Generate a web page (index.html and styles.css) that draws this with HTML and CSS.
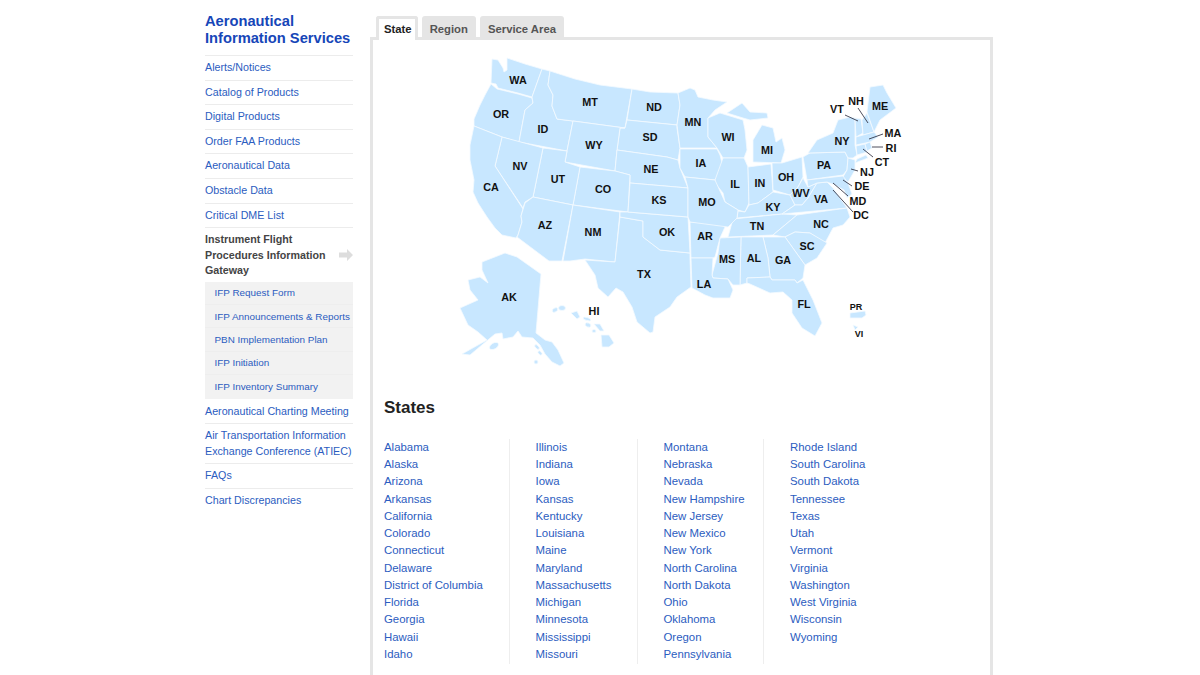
FILE: index.html
```html
<!DOCTYPE html>
<html lang="en">
<head>
<meta charset="utf-8">
<title>Aeronautical Information Services</title>
<link rel="stylesheet" href="styles.css">
</head>
<body>
<div class="page">
  <aside class="sidebar">
    <h2 class="site-title">Aeronautical Information Services</h2>
    <ul class="nav">
      <li><a href="#">Alerts/Notices</a></li>
      <li><a href="#">Catalog of Products</a></li>
      <li><a href="#">Digital Products</a></li>
      <li><a href="#">Order FAA Products</a></li>
      <li><a href="#">Aeronautical Data</a></li>
      <li><a href="#">Obstacle Data</a></li>
      <li><a href="#">Critical DME List</a></li>
      <li class="current">
        <div class="current-row">
          <span class="current-label">Instrument Flight Procedures Information Gateway</span>
          <svg class="arrow" width="14" height="12" viewBox="0 0 14 12"><path d="M0 3.5H8V0L14 6 8 12V8.5H0Z"/></svg>
        </div>
        <ul class="subnav">
          <li><a href="#">IFP Request Form</a></li>
          <li><a href="#">IFP Announcements &amp; Reports</a></li>
          <li><a href="#">PBN Implementation Plan</a></li>
          <li><a href="#">IFP Initiation</a></li>
          <li><a href="#">IFP Inventory Summary</a></li>
        </ul>
      </li>
      <li class="after-sub"><a href="#">Aeronautical Charting Meeting</a></li>
      <li><a href="#">Air Transportation Information Exchange Conference (ATIEC)</a></li>
      <li><a href="#">FAQs</a></li>
      <li><a href="#">Chart Discrepancies</a></li>
    </ul>
  </aside>
  <main class="main">
    <div class="tabs">
      <span class="tab active">State</span>
      <span class="tab">Region</span>
      <span class="tab">Service Area</span>
    </div>
    <section class="panel">
      <svg class="map" width="460" height="320" viewBox="450 50 460 320">
        <g class="states">
          <polygon points="492,59 498,60 503,68 504,72 507,70 507,58 525,64 542,69 532,97 518,93 498,88 496,84 491,83"/>
          <polygon points="491,84 497,89 518,94 532,98 533,103 525,110 519,142 502,137 474,126 474,119 480,105 485,95"/>
          <polygon points="542,69 550,71 548,85 553,95 552,106 557,119 573,121 567,151 519,142 525,110 533,103 532,97"/>
          <polygon points="550,71 575,79 600,85 632,89 625,128 573,121 557,119 552,106 553,95 548,85"/>
          <polygon points="632,89 650,92 678,93 680,105 677,125 627,120"/>
          <polygon points="627,120 677,125 677,128 680,148 678,160 667,157 617,150 620,128 625,128"/>
          <polygon points="573,121 625,128 620,128 617,150 615,171 565,162 567,151"/>
          <polygon points="617,150 667,157 678,160 680,168 688,188 630,183 630,175 615,171"/>
          <polygon points="580,167 615,171 630,175 628,212 573,205"/>
          <polygon points="543,148 567,151 565,162 580,167 573,205 533,197"/>
          <polygon points="502,137 543,148 533,197 525,202 523,208 495,166"/>
          <polygon points="474,126 502,137 495,166 523,209 521,216 522,222 518,235 516,238 502,235 495,228 487,217 478,203 473,192 474,180 470,160 470,145"/>
          <polygon points="533,197 573,205 562,261 549,261 517,237 518,235 522,222 521,216 525,203"/>
          <polygon points="573,205 620,212 615,262 585,259 570,261 563,261"/>
          <polygon points="620,217 643,221 643,237 660,250 680,252 690,253 690,258 691,287 677,297 670,307 655,317 653,332 650,333 637,322 632,307 623,292 616,288 608,297 598,288 595,275 585,260 615,262"/>
          <polygon points="628,212 688,217 690,253 680,252 660,250 643,237 643,221 620,217 620,212"/>
          <polygon points="630,183 688,188 688,217 628,212"/>
          <polygon points="678,93 690,88 695,90 698,97 713,100 727,102 715,110 708,118 708,137 717,148 680,148 677,125 680,105"/>
          <polygon points="680,149 717,149 720,155 723,167 715,180 685,177 680,168"/>
          <polygon points="708,118 720,113 743,120 745,130 747,150 744,158 723,158 717,148 708,137"/>
          <polygon points="727,113 742,103 750,112 767,113 768,118 750,120 743,118"/>
          <polygon points="753,162 753,140 762,125 773,128 776,142 782,138 785,150 781,163"/>
          <polygon points="723,158 744,158 745,160 748,167 749,203 745,212 738,210 725,202 723,193 715,183 715,180"/>
          <polygon points="748,167 771,164 773,192 758,203 749,205"/>
          <polygon points="772,163 782,163 802,157 803,177 798,187 790,195 773,190"/>
          <polygon points="773,192 790,195 795,205 782,214 737,218 738,211 745,212 749,205 758,203"/>
          <polygon points="728,237 733,219 783,214 797,215 773,235"/>
          <polygon points="803,178 808,187 817,183 808,198 802,205 795,205 790,195 798,187"/>
          <polygon points="782,214 795,205 802,205 808,198 817,183 827,182 833,188 847,208"/>
          <polygon points="797,215 847,208 850,217 843,225 833,228 825,243 810,233 795,232 785,237 773,235"/>
          <polygon points="785,237 795,232 810,233 827,243 817,258 805,265"/>
          <polygon points="763,237 785,237 805,265 803,278 797,283 795,280 772,280 770,277 768,258"/>
          <polygon points="741,237 763,237 768,258 770,277 747,278 747,283 740,285"/>
          <polygon points="720,238 741,237 740,285 733,285 728,279 713,278 712,275 718,253"/>
          <polygon points="690,222 727,223 725,227 720,238 715,257 713,258 691,258"/>
          <polygon points="685,177 715,180 725,202 738,210 737,218 728,227 690,222 688,217 688,188"/>
          <polygon points="691,258 713,258 712,275 713,278 728,279 733,290 730,298 713,298 705,295 692,288"/>
          <polygon points="747,278 770,277 772,280 795,280 797,283 803,280 813,300 822,323 815,336 802,328 792,313 792,300 783,292 770,293 750,284 747,283"/>
          <polygon points="803,157 810,153 845,152 848,158 847,170 843,175 807,180"/>
          <polygon points="808,153 817,140 833,133 838,120 850,117 855,118 855,145 857,155 853,158 848,158 845,152"/>
          <polygon points="855,163 868,158 866,155 857,159"/>
          <polygon points="848,158 855,160 855,170 848,182 843,177 847,170"/>
          <polygon points="807,180 843,176 848,183 852,194 847,198 844,190 840,188 835,185 827,182 817,183 808,187"/>
          <polygon points="855,118 861,119 863,133 856,137"/>
          <polygon points="862,120 867,113 874,132 863,135"/>
          <polygon points="867,112 870,87 883,85 887,93 896,108 880,120 874,132"/>
          <polygon points="856,137 874,132 878,137 870,142 856,145"/>
          <polygon points="856,146 865,144 867,152 857,155"/>
          <polygon points="865,144 870,142 872,148 867,151"/>
          <polygon points="505,253 517,257 541,274 536,333 545,340 552,342 558,350 564,363 560,366 552,362 545,354 540,345 533,338 522,337 518,331 513,337 503,339 502,333 495,334 470,355 462,354 487,340 478,332 468,325 460,308 478,300 470,290 468,280 480,277 488,283 482,270 482,262"/>
          <ellipse cx="494" cy="346" rx="5" ry="3" transform="rotate(-30 494 346)"/>
          <ellipse cx="537" cy="347" rx="3" ry="1.5" transform="rotate(45 537 347)"/>
          <ellipse cx="540" cy="353" rx="2.5" ry="1.5" transform="rotate(45 540 353)"/>
          <ellipse cx="536" cy="362" rx="2" ry="2"/>
          <ellipse cx="555" cy="310" rx="3" ry="2" transform="rotate(-30 555 310)"/>
          <ellipse cx="562" cy="308" rx="3.5" ry="2.5"/>
          <polygon points="571,313 577,311 580,317 577,319"/>
          <ellipse cx="587" cy="319" rx="4" ry="1.5" transform="rotate(15 587 319)"/>
          <ellipse cx="588" cy="325" rx="3" ry="2" transform="rotate(20 588 325)"/>
          <ellipse cx="594" cy="331" rx="2" ry="1.5"/>
          <polygon points="594,324 600,324 604,331 600,331"/>
          <polygon points="601,335 609,335 614,343 609,347 602,347"/>
          <polygon points="850,313 865,311 866,315 862,318 850,318"/>
          <polygon points="853,325 858,327 855,330"/>
        </g>
        <g class="leaders">
          <line x1="845" y1="115" x2="858" y2="121"/>
          <line x1="858" y1="108" x2="868" y2="123"/>
          <line x1="883" y1="134" x2="869" y2="139"/>
          <line x1="872" y1="147" x2="883" y2="147"/>
          <line x1="863" y1="149" x2="873" y2="157"/>
          <line x1="851" y1="169" x2="858" y2="171"/>
          <line x1="843" y1="180" x2="852" y2="186"/>
          <line x1="833" y1="183" x2="848" y2="196"/>
          <line x1="833" y1="190" x2="853" y2="212"/>
        </g>
        <g class="labels">
          <text x="518" y="84">WA</text><text x="501" y="118">OR</text><text x="543" y="133">ID</text><text x="590" y="106">MT</text><text x="654" y="111">ND</text><text x="650" y="141">SD</text><text x="594" y="149">WY</text><text x="651" y="173">NE</text><text x="603" y="193">CO</text><text x="659" y="204">KS</text><text x="558" y="183">UT</text><text x="520" y="170">NV</text><text x="491" y="191">CA</text><text x="545" y="229">AZ</text><text x="593" y="236">NM</text><text x="667" y="236">OK</text><text x="644" y="278">TX</text><text x="693" y="126">MN</text><text x="701" y="167">IA</text><text x="707" y="206">MO</text><text x="705" y="240">AR</text><text x="704" y="288">LA</text><text x="728" y="141">WI</text><text x="735" y="188">IL</text><text x="760" y="187">IN</text><text x="767" y="154">MI</text><text x="786" y="181">OH</text><text x="773" y="211">KY</text><text x="757" y="230">TN</text><text x="727" y="263">MS</text><text x="754" y="262">AL</text><text x="783" y="264">GA</text><text x="804" y="308">FL</text><text x="807" y="250">SC</text><text x="821" y="228">NC</text><text x="821" y="203">VA</text><text x="801" y="197">WV</text><text x="824" y="169">PA</text><text x="842" y="145">NY</text><text x="880" y="110">ME</text><text x="856" y="105">NH</text><text x="837" y="113">VT</text><text x="893" y="137">MA</text><text x="891" y="152">RI</text><text x="882" y="166">CT</text><text x="867" y="176">NJ</text><text x="862" y="190">DE</text><text x="858" y="205">MD</text><text x="861" y="219">DC</text><text x="509" y="301">AK</text><text x="594" y="315">HI</text>
          <text class="small" x="856" y="310">PR</text><text class="small" x="859" y="337">VI</text>
        </g>
      </svg>
      <h2 class="states-title">States</h2>
      <div class="state-columns">
        <ul class="col col-1">
          <li><a href="#">Alabama</a></li><li><a href="#">Alaska</a></li><li><a href="#">Arizona</a></li><li><a href="#">Arkansas</a></li><li><a href="#">California</a></li><li><a href="#">Colorado</a></li><li><a href="#">Connecticut</a></li><li><a href="#">Delaware</a></li><li><a href="#">District of Columbia</a></li><li><a href="#">Florida</a></li><li><a href="#">Georgia</a></li><li><a href="#">Hawaii</a></li><li><a href="#">Idaho</a></li>
        </ul>
        <ul class="col col-2">
          <li><a href="#">Illinois</a></li><li><a href="#">Indiana</a></li><li><a href="#">Iowa</a></li><li><a href="#">Kansas</a></li><li><a href="#">Kentucky</a></li><li><a href="#">Louisiana</a></li><li><a href="#">Maine</a></li><li><a href="#">Maryland</a></li><li><a href="#">Massachusetts</a></li><li><a href="#">Michigan</a></li><li><a href="#">Minnesota</a></li><li><a href="#">Mississippi</a></li><li><a href="#">Missouri</a></li>
        </ul>
        <ul class="col col-3">
          <li><a href="#">Montana</a></li><li><a href="#">Nebraska</a></li><li><a href="#">Nevada</a></li><li><a href="#">New Hampshire</a></li><li><a href="#">New Jersey</a></li><li><a href="#">New Mexico</a></li><li><a href="#">New York</a></li><li><a href="#">North Carolina</a></li><li><a href="#">North Dakota</a></li><li><a href="#">Ohio</a></li><li><a href="#">Oklahoma</a></li><li><a href="#">Oregon</a></li><li><a href="#">Pennsylvania</a></li>
        </ul>
        <ul class="col col-4">
          <li><a href="#">Rhode Island</a></li><li><a href="#">South Carolina</a></li><li><a href="#">South Dakota</a></li><li><a href="#">Tennessee</a></li><li><a href="#">Texas</a></li><li><a href="#">Utah</a></li><li><a href="#">Vermont</a></li><li><a href="#">Virginia</a></li><li><a href="#">Washington</a></li><li><a href="#">West Virginia</a></li><li><a href="#">Wisconsin</a></li><li><a href="#">Wyoming</a></li>
        </ul>
      </div>
    </section>
  </main>
</div>
</body>
</html>
```
FILE: styles.css
```css
* { box-sizing: border-box; }
html, body { margin: 0; padding: 0; height: 675px; overflow: hidden; background: #fff; }
body { font-family: "Liberation Sans", Arial, sans-serif; color: #222; }
ul { list-style: none; margin: 0; padding: 0; }
a { color: #2b5cc0; text-decoration: none; }
.page { display: flex; align-items: flex-start; padding: 0 0 0 205px; gap: 17px; height: 675px; overflow: hidden; }
.sidebar { width: 148px; flex: none; padding-top: 13px; }
.site-title { margin: 0; font-size: 14.7px; line-height: 17px; font-weight: bold; color: #1646b8; padding-bottom: 8px; }
.nav { font-size: 10.7px; line-height: 15.5px; }
.nav > li { border-top: 1px solid #ececec; padding: 4px 0 4.1px; }
.nav > li.current { padding: 4px 0 0; }
.nav > li.after-sub { border-top: 0; }
.current-row { display: flex; align-items: center; justify-content: space-between; font-weight: bold; color: #444; padding-bottom: 3px; }
.current-label { width: 130px; }
.arrow { fill: #ddd; flex: none; }
.subnav { background: #f2f2f2; font-size: 9.9px; }
.subnav li { height: 23.4px; padding: 3.5px 0 0 9.5px; border-bottom: 1px solid #eee; white-space: nowrap; }
.subnav li:last-child { border-bottom: 0; }
.nav > li.after-sub { padding-top: 5px; }
.main { width: 623px; flex: none; }
.tabs { display: flex; gap: 4px; padding: 16px 0 0 6px; height: 40px; position: relative; z-index: 1; font-size: 11.3px; font-weight: bold; }
.tab { height: 24px; padding: 6px 8px 0; background: #e5e5e5; color: #555; border-radius: 3px 3px 0 0; line-height: 15px; }
.tab.active { background: #fff; color: #222; border: 3px solid #e5e5e5; border-bottom: 0; padding: 3px 3px 0 5px; }
.panel { margin-top: -3px; border: 3px solid #e5e5e5; height: 800px; padding: 0 11px; }
.map { display: block; margin: 10px 0 0 66px; }
.states { fill: #c8e7ff; stroke: #f4faff; stroke-width: 0.8; stroke-linejoin: round; }
.leaders { stroke: #223; stroke-width: 0.8; }
.labels { font-size: 10.8px; font-weight: bold; fill: #111; text-anchor: middle; }
.labels .small { font-size: 9px; }
.states-title { margin: 28px 0 0; font-size: 17px; line-height: 20px; font-weight: bold; color: #222; }
.state-columns { display: flex; margin-top: 21px; font-size: 11.4px; line-height: 17.23px; }
.col { padding: 0; height: 225px; }
.col-1 { width: 126px; border-right: 1px solid #eee; }
.col-2 { width: 127.5px; padding-left: 25.5px; border-right: 1px solid #eee; }
.col-3 { width: 126.5px; padding-left: 26px; border-right: 1px solid #eee; }
.col-4 { padding-left: 26px; }
```
